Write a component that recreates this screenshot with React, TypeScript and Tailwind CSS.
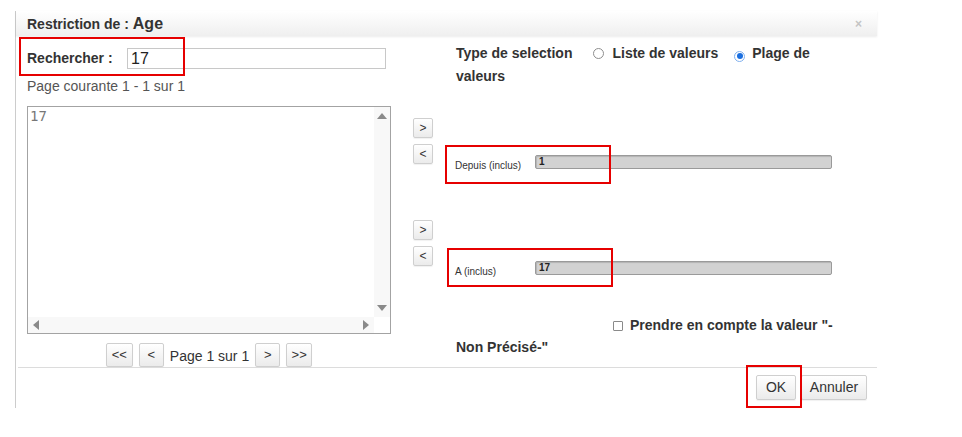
import type { ReactNode } from "react";

function SmallButton({ children, className = "" }: { children: ReactNode; className?: string }) {
  return (
    <button
      className={`flex shrink-0 items-center justify-center rounded-[2px] border border-[#cfcfcf] bg-linear-to-b from-white to-[#ebebeb] text-[#333] shadow-[0_1px_1px_rgba(0,0,0,0.06)] ${className}`}
    >
      {children}
    </button>
  );
}

function Radio({ checked }: { checked?: boolean }) {
  return checked ? (
    <span className="inline-flex h-[11px] w-[11px] items-center justify-center rounded-full border border-[#7fb0ee] bg-white align-[-1px]">
      <span className="h-[6px] w-[6px] rounded-full bg-[#1a6fe0]" />
    </span>
  ) : (
    <span className="inline-block h-[11px] w-[11px] rounded-full border border-[#8e8e8e] bg-white align-[-1px]" />
  );
}

function Tri({ dir }: { dir: "up" | "down" | "left" | "right" }) {
  const pts = {
    up: "0,6 5,0 10,6",
    down: "0,0 10,0 5,6",
    left: "6,0 6,10 0,5",
    right: "0,0 6,5 0,10",
  }[dir];
  const vertical = dir === "up" || dir === "down";
  return (
    <svg width={vertical ? 10 : 6} height={vertical ? 6 : 10} viewBox={vertical ? "0 0 10 6" : "0 0 6 10"}>
      <polygon points={pts} fill="#8a8a8a" />
    </svg>
  );
}

function RangeField({ label, value }: { label: string; value: string }) {
  return (
    <div className="ml-[22px] flex items-start">
      <span className="mt-[5px] w-[80px] text-[10px] leading-[12px] text-[#333]">{label}</span>
      <div className="flex h-[14px] w-[297px] items-center rounded-[2px] border border-[#9a9a9a] bg-[#d2d2d2] pl-[3px] text-[10px] font-bold leading-none text-[#222] shadow-[inset_1px_1px_1px_rgba(0,0,0,0.15)]">
        {value}
      </div>
    </div>
  );
}

export default function App() {
  return (
    <div className="relative h-[437px] w-[962px] overflow-hidden bg-white font-['Liberation_Sans',Arial,sans-serif] text-[#333]">
      <div className="ml-[15px] mt-[11px] flex h-[397px] w-[862px] flex-col border-l border-[#cccccc] bg-white">
        {/* title bar */}
        <div className="flex h-[25px] shrink-0 items-center justify-between bg-linear-to-b from-white to-[#efefef] pl-[11px] pr-[15px] pt-[1px] shadow-[0_1px_2px_rgba(0,0,0,0.08)]">
          <div className="font-bold text-[#333]">
            <span className="text-[14px]">Restriction de : </span>
            <span className="text-[16px]">Age</span>
          </div>
          <span className="text-[12px] font-bold leading-none text-[#c4c4c4]">×</span>
        </div>

        {/* body */}
        <div className="flex h-[331px] shrink-0">
          {/* search + list */}
          <div className="ml-[11px] flex w-[364px] flex-col pt-[12px]">
            <div className="flex h-[21px] items-center">
              <span className="w-[100px] text-[14px] font-bold text-[#333]">Rechercher :</span>
              <div className="flex h-[21px] w-[259px] items-center border border-[#c8c8c8] pl-[3px] text-[16px] text-[#222]">
                17
              </div>
            </div>
            <div className="mt-[7px] h-[20px] text-[14px] leading-[20px] text-[#555]">
              Page courante 1 - 1 sur 1
            </div>
            <div className="mt-[10px] flex h-[228px] flex-col border border-[#a3a3a3] bg-white">
              <div className="flex flex-1">
                <div className="flex-1 pl-[2px] font-['DejaVu_Sans_Mono',monospace] text-[14px] leading-[18px] text-[#777]">
                  17
                </div>
                <div className="flex w-[16px] flex-col items-center justify-between bg-[#f8f8f8] pb-[6px] pt-[6px]">
                  <Tri dir="up" />
                  <Tri dir="down" />
                </div>
              </div>
              <div className="flex h-[16px]">
                <div className="flex flex-1 items-center justify-between bg-[#f8f8f8] pl-[5px] pr-[5px]">
                  <Tri dir="left" />
                  <Tri dir="right" />
                </div>
                <div className="w-[16px] bg-white" />
              </div>
            </div>
            <div className="mt-[9px] flex h-[24px] justify-center gap-[6px]">
              <SmallButton className="h-[24px] w-[27px] text-[13px]">&lt;&lt;</SmallButton>
              <SmallButton className="h-[24px] w-[25px] text-[13px]">&lt;</SmallButton>
              <span className="flex h-[24px] items-center pt-[2px] text-[14px] text-[#333]">Page 1 sur 1</span>
              <SmallButton className="h-[24px] w-[25px] text-[13px]">&gt;</SmallButton>
              <SmallButton className="h-[24px] w-[26px] text-[13px]">&gt;&gt;</SmallButton>
            </div>
          </div>

          {/* selection type + range */}
          <div className="ml-[22px] flex w-[440px] flex-col">
            <div className="w-[437px] pl-[43px] pt-[6px] text-[14px] font-bold leading-[23px] text-[#333]">
              Type de selection
              <span className="ml-[21px] mr-[8px]">
                <Radio />
              </span>
              Liste de valeurs
              <span className="ml-[16px] mr-[7px]">
                <Radio checked />
              </span>
              Plage de valeurs
            </div>

            <div className="mt-[30px] flex h-[60px] items-start">
              <div className="flex flex-col gap-[6px]">
                <SmallButton className="h-[20px] w-[20px] text-[12px]">&gt;</SmallButton>
                <SmallButton className="h-[20px] w-[20px] text-[12px]">&lt;</SmallButton>
              </div>
              <div className="mt-[37px]">
                <RangeField label="Depuis (inclus)" value="1" />
              </div>
            </div>

            <div className="mt-[42px] flex h-[60px] items-start">
              <div className="flex flex-col gap-[6px]">
                <SmallButton className="h-[20px] w-[20px] text-[12px]">&gt;</SmallButton>
                <SmallButton className="h-[20px] w-[20px] text-[12px]">&lt;</SmallButton>
              </div>
              <div className="mt-[41px]">
                <RangeField label="A (inclus)" value="17" />
              </div>
            </div>

            <p className="mt-[34px] w-[437px] pl-[43px] indent-[157px] text-[14px] font-bold leading-[22px] text-[#333]">
              <span className="mr-[7px] inline-block h-[10px] w-[10px] rounded-[1px] border border-[#8a8a8a] bg-white align-[-1px]" />
              Prendre en compte la valeur "-<wbr />Non Précisé-"
            </p>
          </div>
        </div>

        {/* footer */}
        <div className="ml-[2px] flex h-[41px] shrink-0 items-start justify-end gap-[5px] border-t border-[#dcdcdc] pr-[10px] pt-[7px]">
          <SmallButton className="h-[25px] w-[40px] text-[14px]">OK</SmallButton>
          <SmallButton className="h-[25px] w-[66px] text-[14px]">Annuler</SmallButton>
        </div>
      </div>

      {/* highlight frames */}
      <div className="pointer-events-none absolute left-[19px] top-[37px] h-[39px] w-[166px] border-2 border-[#e60000]" />
      <div className="pointer-events-none absolute left-[445px] top-[145px] h-[39px] w-[166px] border-2 border-[#e60000]" />
      <div className="pointer-events-none absolute left-[447px] top-[248px] h-[39px] w-[166px] border-2 border-[#e60000]" />
      <div className="pointer-events-none absolute left-[746px] top-[365px] h-[43px] w-[56px] border-2 border-[#e60000]" />
    </div>
  );
}
